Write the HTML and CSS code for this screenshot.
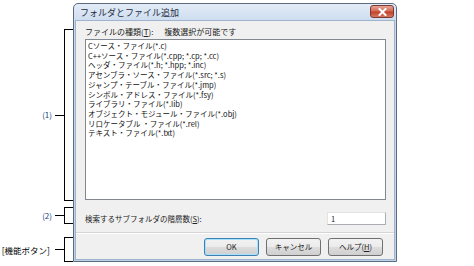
FILE: index.html
```html
<!DOCTYPE html>
<html lang="ja">
<head>
    <meta charset="UTF-8">
    <title>フォルダとファイル追加</title>
    <link rel="stylesheet" href="styles.css">
</head>
<body>
    <div class="page">
        <!-- callouts on the left -->
        <div class="notes">
            <div class="note note-list">
                <span class="note-label">(1)</span>
                <span class="note-dash"></span>
                <span class="note-bracket"></span>
            </div>
            <div class="note note-depth">
                <span class="note-label">(2)</span>
                <span class="note-dash"></span>
                <span class="note-bracket"></span>
            </div>
            <div class="note note-buttons">
                <span class="note-label">[機能ボタン]</span>
                <span class="note-dash"></span>
                <span class="note-bracket"></span>
            </div>
        </div>

        <div class="window">
            <div class="titlebar">
                <span class="title">フォルダとファイル追加</span>
                <span class="close-btn">
                    <svg width="11" height="8" viewBox="0 0 11 8">
                        <path d="M2.5 1 L8.5 7 M8.5 1 L2.5 7" stroke="#fff" stroke-width="2" stroke-linecap="square"/>
                    </svg>
                </span>
            </div>
            <div class="panel">
                <div class="field-label">
                    <span>ファイルの種類(<u>T</u>):</span>
                    <span class="hint">複数選択が可能です</span>
                </div>
                <ul class="listbox">
                    <li>Cソース・ファイル(*.c)</li>
                    <li>C++ソース・ファイル(*.cpp; *.cp; *.cc)</li>
                    <li>ヘッダ・ファイル(*.h; *.hpp; *.inc)</li>
                    <li>アセンブラ・ソース・ファイル(*.src; *.s)</li>
                    <li>ジャンプ・テーブル・ファイル(*.jmp)</li>
                    <li>シンボル・アドレス・ファイル(*.fsy)</li>
                    <li>ライブラリ・ファイル(*.lib)</li>
                    <li>オブジェクト・モジュール・ファイル(*.obj)</li>
                    <li>リロケータブル ・ファイル(*.rel)</li>
                    <li>テキスト・ファイル(*.txt)</li>
                </ul>
                <div class="depth-row">
                    <span>検索するサブフォルダの階層数(<u>S</u>):</span>
                    <span class="textbox">1</span>
                </div>
                <div class="separator"></div>
                <div class="buttons">
                    <span class="btn btn-default">OK</span>
                    <span class="btn">キャンセル</span>
                    <span class="btn">ヘルプ(<u>H</u>)</span>
                </div>
            </div>
        </div>
    </div>
</body>
</html>
```

FILE: styles.css
```css
body {
    margin: 0;
    background: #ffffff;
    font-family: "Noto Sans CJK JP", "DejaVu Sans", sans-serif;
    color: #000;
}

.page {
    display: flex;
    width: 474px;
    height: 266px;
}

/* ---- callouts ---- */
.notes {
    width: 73px;
    display: flex;
    flex-direction: column;
}

.note {
    display: flex;
    align-items: center;
    justify-content: flex-end;
}

.note-list {
    margin-top: 29px;
    height: 172px;
}

.note-depth {
    margin-top: 6px;
    height: 17px;
}

.note-buttons {
    margin-top: 13px;
    height: 25px;
}

.note-label {
    font-size: 8px;
    line-height: 10px;
    color: #23407a;
}

.note-buttons .note-label {
    margin-right: 2px;
    font-size: 8.5px;
    color: #000;
}

.note-dash {
    width: 9px;
    height: 1px;
    margin-left: 3px;
    background: #000;
}

.note-bracket {
    align-self: stretch;
    width: 8px;
    border: 1px solid #000;
    border-right: none;
}

/* ---- dialog window ---- */
.window {
    margin-top: 3px;
    width: 320px;
    height: 256px;
    border: 1px solid #5b6c80;
    border-radius: 5px 5px 0 0;
    background: linear-gradient(to bottom, #e3ecf7, #c9daee 20px, #bfd3ea);
    display: flex;
    flex-direction: column;
    padding: 0 1px 1px 1px;
}

.titlebar {
    height: 16px;
    display: flex;
    align-items: center;
    justify-content: space-between;
    padding: 0 1px 0 5px;
}

.title {
    font-size: 9px;
    color: #1e2c40;
}

.close-btn {
    width: 22px;
    height: 11px;
    margin-top: -1px;
    border: 1px solid #7a3a32;
    border-radius: 3px;
    background: linear-gradient(to bottom, #e8a597, #d36b55 45%, #c4402b 55%, #d8775f);
    display: flex;
    align-items: center;
    justify-content: center;
}

.panel {
    flex: 1;
    background: #f0f0f0;
    border: 1px solid #9fb3cc;
    padding: 6px 6px 0 9px;
    display: flex;
    flex-direction: column;
    font-size: 7.5px;
}

.field-label {
    font-size: 8px;
    line-height: 10px;
    height: 12px;
    color: #222;
}

.hint {
    margin-left: 9px;
}

.listbox {
    list-style: none;
    margin: 0 2px 0 0;
    padding: 1px 2px;
    height: 157px;
    background: #fff;
    border: 1px solid #828790;
    color: #111;
}

.listbox li {
    line-height: 9.7px;
    white-space: nowrap;
}

.depth-row {
    display: flex;
    align-items: center;
    justify-content: space-between;
    margin-top: 12px;
    padding-right: 2px;
    color: #222;
}

.textbox {
    width: 54px;
    height: 11px;
    line-height: 11px;
    padding-left: 3px;
    background: #fff;
    border: 1px solid #abadb3;
    border-top-color: #e3e3e3;
    border-left-color: #e3e3e3;
}

.separator {
    margin: 7px -6px 0 -9px;
    border-top: 1px solid #d5d5d5;
    border-bottom: 1px solid #ffffff;
}

.buttons {
    display: flex;
    justify-content: flex-end;
    gap: 7px;
    margin-top: 4px;
    padding-right: 5px;
}

.btn {
    width: 53px;
    height: 16px;
    line-height: 16px;
    text-align: center;
    border: 1px solid #707070;
    border-radius: 3px;
    background: linear-gradient(to bottom, #f2f2f2, #ebebeb 50%, #dddddd 51%, #cfcfcf);
    color: #222;
}

.btn-default {
    border-color: #3c7fb1;
    box-shadow: inset 0 0 0 1px #a6e3fb;
}
```
